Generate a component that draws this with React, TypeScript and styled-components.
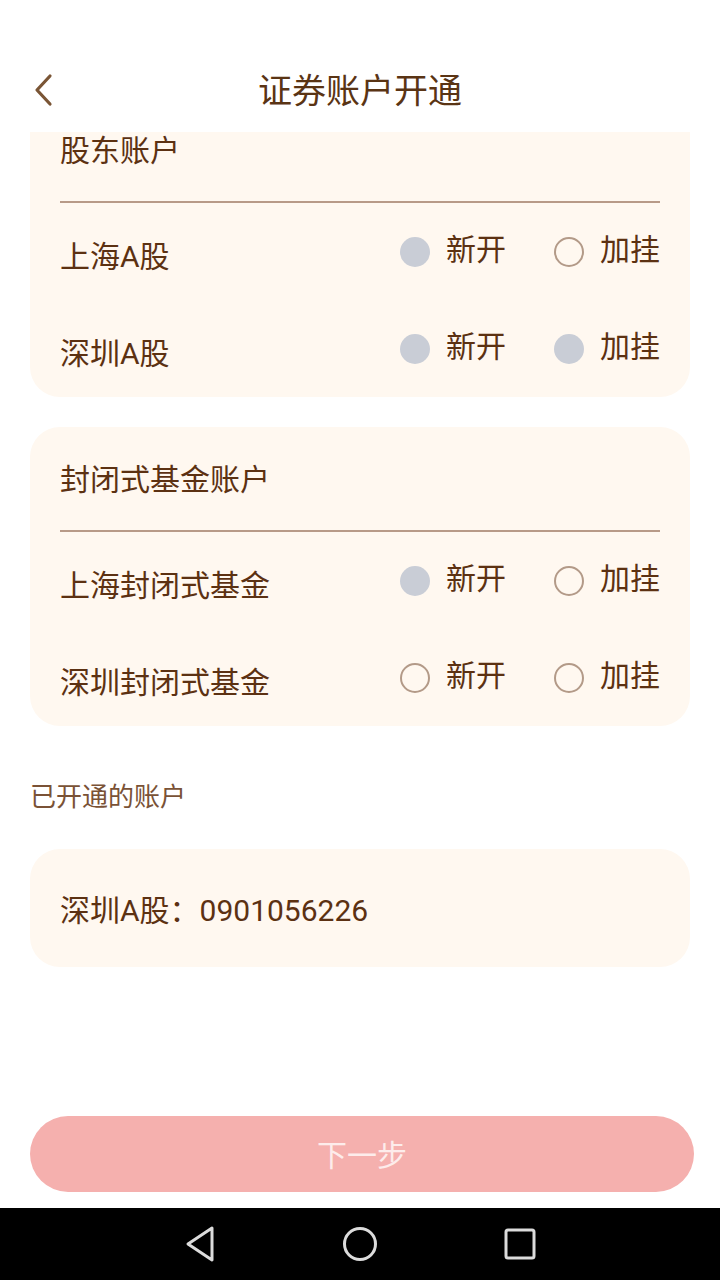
import React from "react";
import styled, { createGlobalStyle } from "styled-components";

const GlobalStyle = createGlobalStyle`
  html, body {
    margin: 0;
    padding: 0;
    background: #ffffff;
  }
  body {
    font-family: Roboto, "Noto Sans CJK SC", sans-serif;
  }
`;

type RadioState = "checked" | "empty";

type AccountRow = {
  name: string;
  open: RadioState;
  attach: RadioState;
};

type Section = {
  title: string;
  rows: AccountRow[];
};

const sections: Section[] = [
  {
    title: "股东账户",
    rows: [
      { name: "上海A股", open: "checked", attach: "empty" },
      { name: "深圳A股", open: "checked", attach: "checked" },
    ],
  },
  {
    title: "封闭式基金账户",
    rows: [
      { name: "上海封闭式基金", open: "checked", attach: "empty" },
      { name: "深圳封闭式基金", open: "empty", attach: "empty" },
    ],
  },
];

export default function App() {
  return (
    <>
      <GlobalStyle />
      <Page>
        <Header>
          <BackButton aria-label="返回">
            <svg width="22" height="34" viewBox="0 0 22 34" fill="none">
              <path d="M18 3 L5 17 L18 31" stroke="#7a5535" strokeWidth="3.2" strokeLinecap="round" strokeLinejoin="round" />
            </svg>
          </BackButton>
          <Title>证券账户开通</Title>
          <span />
        </Header>

        <Content>
          {sections.map((section, i) => (
            <Card key={section.title} $first={i === 0}>
              <CardTitle>{section.title}</CardTitle>
              <Divider />
              {section.rows.map((row) => (
                <Row key={row.name}>
                  <RowLabel>{row.name}</RowLabel>
                  <Options>
                    <Option>
                      <Radio $state={row.open} />
                      <OptionText>新开</OptionText>
                    </Option>
                    <Option>
                      <Radio $state={row.attach} />
                      <OptionText>加挂</OptionText>
                    </Option>
                  </Options>
                </Row>
              ))}
            </Card>
          ))}

          <SectionLabel>已开通的账户</SectionLabel>
          <OpenedCard>
            <OpenedText>深圳A股：0901056226</OpenedText>
          </OpenedCard>
        </Content>

        <Footer>
          <NextButton disabled>下一步</NextButton>
        </Footer>

        <NavBar>
          <svg width="34" height="38" viewBox="0 0 34 38" fill="none">
            <path d="M29 3 L5 19 L29 35 Z" stroke="#dcdcdc" strokeWidth="3" strokeLinejoin="round" />
          </svg>
          <svg width="36" height="36" viewBox="0 0 36 36" fill="none">
            <circle cx="18" cy="18" r="15.5" stroke="#dcdcdc" strokeWidth="3" />
          </svg>
          <svg width="32" height="32" viewBox="0 0 32 32" fill="none">
            <rect x="2" y="2" width="28" height="28" rx="2" stroke="#dcdcdc" strokeWidth="3" />
          </svg>
        </NavBar>
      </Page>
    </>
  );
}

const Page = styled.div`
  width: 720px;
  height: 1280px;
  display: flex;
  flex-direction: column;
  background: #ffffff;
  overflow: hidden;
`;

const Header = styled.header`
  height: 132px;
  box-sizing: border-box;
  padding-top: 52px;
  display: grid;
  grid-template-columns: 90px 1fr 90px;
  grid-template-rows: 76px;
  align-items: center;
  background: #ffffff;
  flex-shrink: 0;
`;

const BackButton = styled.button`
  border: none;
  background: none;
  padding: 0 0 0 32px;
  height: 40px;
  display: flex;
  align-items: center;
  justify-content: flex-start;
  cursor: pointer;
`;

const Title = styled.h1`
  margin: -4px 0 0;
  text-align: center;
  font-size: 34px;
  font-weight: 400;
  color: #5a3414;
  letter-spacing: 0;
`;

const Content = styled.main`
  flex: 1;
  overflow: hidden;
  padding: 0 30px;
  display: flex;
  flex-direction: column;
`;

const Card = styled.section<{ $first?: boolean }>`
  flex-shrink: 0;
  background: #fff8f0;
  border-radius: 30px;
  padding: 0 30px;
  margin-top: ${(p) => (p.$first ? "-34px" : "30px")};
`;

const CardTitle = styled.div`
  padding: 36px 0 33px;
  line-height: 34px;
  font-size: 30px;
  color: #5c3112;
`;

const Divider = styled.div`
  height: 2px;
  background: #b89a88;
`;

const Row = styled.div`
  height: 97px;
  display: flex;
  align-items: center;
  justify-content: space-between;
`;

const RowLabel = styled.span`
  font-size: 30px;
  color: #5c3112;
  padding-top: 4px;
`;

const Options = styled.div`
  display: flex;
  align-items: center;
  gap: 48px;
`;

const Option = styled.label`
  display: flex;
  align-items: center;
  gap: 16px;
`;

const Radio = styled.span<{ $state: RadioState }>`
  width: 30px;
  height: 30px;
  box-sizing: border-box;
  border-radius: 50%;
  background: ${(p) => (p.$state === "checked" ? "#c9cdd6" : "transparent")};
  border: ${(p) => (p.$state === "checked" ? "none" : "2px solid #b39a88")};
`;

const OptionText = styled.span`
  font-size: 30px;
  color: #5c3112;
  line-height: 34px;
  margin-top: -4px;
`;

const SectionLabel = styled.div`
  padding: 52px 0 33px;
  line-height: 38px;
  font-size: 26px;
  color: #7a5236;
`;

const OpenedCard = styled.div`
  flex-shrink: 0;
  height: 118px;
  box-sizing: border-box;
  background: #fff8f0;
  border-radius: 30px;
  padding: 0 30px;
  display: flex;
  align-items: center;
`;

const OpenedText = styled.span`
  font-size: 30px;
  color: #5c3112;
`;

const Footer = styled.footer`
  flex-shrink: 0;
  padding: 0 26px 16px 30px;
`;

const NextButton = styled.button`
  width: 100%;
  height: 76px;
  border: none;
  border-radius: 38px;
  background: #f5b0ae;
  color: #fdeceb;
  font-family: Roboto, "Noto Sans CJK SC", sans-serif;
  font-size: 30px;
  letter-spacing: 0;
  padding-bottom: 4px;
`;

const NavBar = styled.nav`
  flex-shrink: 0;
  height: 72px;
  background: #000000;
  display: grid;
  grid-template-columns: repeat(3, 160px);
  justify-content: center;
  justify-items: center;
  align-items: center;
`;
